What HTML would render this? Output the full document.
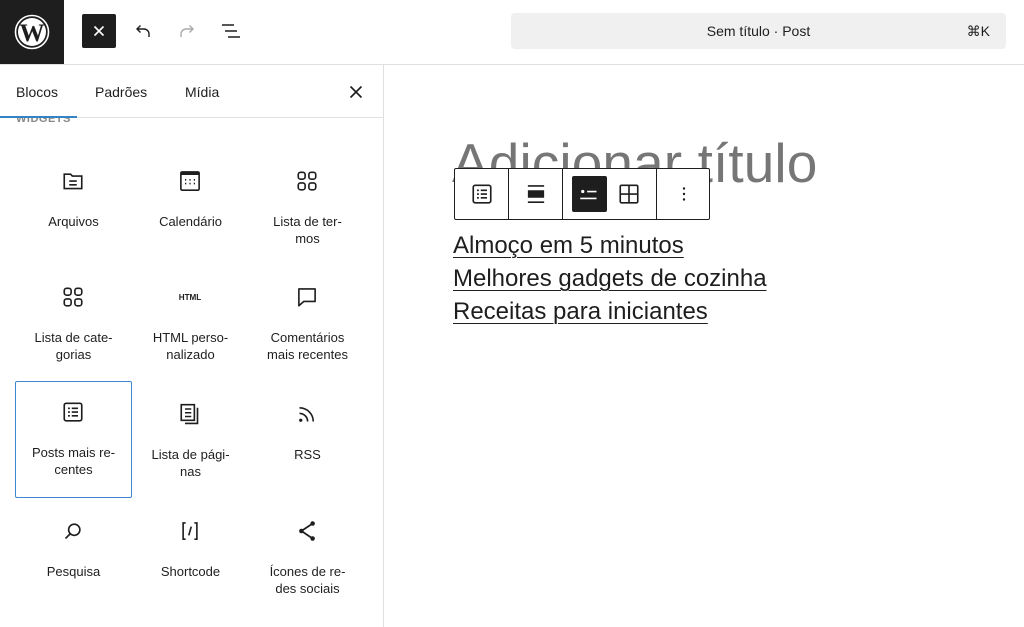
<!DOCTYPE html>
<html><head><meta charset="utf-8"><style>
*{box-sizing:border-box;margin:0;padding:0}
body{width:1024px;height:627px;overflow:hidden;background:#fff;font-family:"Liberation Sans",sans-serif;color:#1e1e1e;position:relative}
.abs{position:absolute}
.top{left:0;top:0;width:1024px;height:65px;border-bottom:1px solid #e0e0e0}
.logo{left:0;top:0;width:64px;height:64px;background:#1e1e1e;display:flex;align-items:center;justify-content:center}
.side{left:0;top:65px;width:384px;height:562px;border-right:1px solid #e0e0e0}
.tabs{left:0;top:65px;width:383px;height:53px;border-bottom:1px solid #e0e0e0;font-size:14px}
.tabs span{position:absolute;top:19px}
.cell{position:absolute;width:117px;height:117px;text-align:center;font-size:13px;line-height:17px;color:#1e1e1e}
.cell svg{position:absolute;left:43px;top:16px}
.cell .l{position:absolute;left:0;right:0;top:63px}
.links a{display:block;color:#1e1e1e;font-size:24px;line-height:33px;text-decoration:underline;text-decoration-thickness:1px;text-underline-offset:4px}
</style></head><body>
<div class="abs top"></div>
<div class="abs logo"><svg width="36" height="36" viewBox="0 0 36 36"><circle cx="18" cy="18" r="16.5" fill="none" stroke="#fff" stroke-width="1.6"/><circle cx="18" cy="18" r="14" fill="#fff"/><text x="18" y="27" text-anchor="middle" font-family="Liberation Serif" font-weight="bold" font-size="25" fill="#1e1e1e">W</text></svg></div>
<div class="abs" style="left:82px;top:14px;width:34px;height:34px;background:#1e1e1e;border-radius:2px"><svg width="34" height="34"><path d="M12.5 12.5l9 9M21.5 12.5l-9 9" stroke="#fff" stroke-width="1.6"/></svg></div>
<svg class="abs" style="left:131px;top:19px" width="24" height="24"><path d="M18 18v-3a5 5 0 0 0-5-5H6M9.5 6.5L6 10l3.5 3.5" fill="none" stroke="#1e1e1e" stroke-width="1.4"/></svg>
<svg class="abs" style="left:175px;top:19px" width="24" height="24"><path d="M6 18v-3a5 5 0 0 1 5-5h7M14.5 6.5L18 10l-3.5 3.5" fill="none" stroke="#aaa" stroke-width="1.4"/></svg>
<svg class="abs" style="left:219px;top:19px" width="24" height="24"><path d="M3 6h12M6 12h12M9 18h12" stroke="#1e1e1e" stroke-width="1.6"/></svg>
<div class="abs" style="left:511px;top:13px;width:495px;height:36px;background:#f0f0f0;border-radius:4px;font-size:14px"><span class="abs" style="left:0;right:0;top:10px;text-align:center">Sem título · Post</span><span class="abs" style="right:16px;top:10px">⌘K</span></div>
<div class="abs side"></div>
<div class="abs tabs"><span style="left:16px">Blocos</span><span style="left:95px">Padrões</span><span style="left:185px">Mídia</span><svg class="abs" style="left:346px;top:17px" width="20" height="20"><path d="M4.5 4.5l11 11M15.5 4.5l-11 11" stroke="#1e1e1e" stroke-width="1.6"/></svg></div>
<div class="abs" style="left:16px;top:116px;font-size:11px;font-weight:bold;color:#888;letter-spacing:.5px;height:10px;overflow:hidden"><span style="position:relative;top:-3px">WIDGETS</span></div>
<div class="abs" style="left:0;top:116px;width:77px;height:2px;background:#3582c4"></div>

<div class="cell" style="left:15px;top:150px"><svg width="30" height="30" viewBox="0 0 24 24"><path d="M5 6.5h5l1.5 1.5h7.5v10h-14z" fill="none" stroke="#1e1e1e" stroke-width="1.3"/><path d="M9 12h6M9 15h6" stroke="#1e1e1e" stroke-width="1.3"/></svg><div class="l">Arquivos</div></div>
<div class="cell" style="left:132px;top:150px"><svg width="30" height="30" viewBox="0 0 24 24"><rect x="4.7" y="4.7" width="14.6" height="14.6" rx="1" fill="none" stroke="#1e1e1e" stroke-width="1.3"/><rect x="4.7" y="4.7" width="14.6" height="2.5" fill="#1e1e1e"/><path d="M8 11h1M11.5 11h1M15 11h1M8 14h1M11.5 14h1M15 14h1" stroke="#1e1e1e" stroke-width="1.3"/></svg><div class="l">Calendário</div></div>
<div class="cell" style="left:249px;top:150px"><svg width="30" height="30" viewBox="0 0 24 24"><g fill="none" stroke="#1e1e1e" stroke-width="1.3"><rect x="5" y="5" width="5.5" height="5.5" rx="1.8"/><rect x="13.5" y="5" width="5.5" height="5.5" rx="1.8"/><rect x="5" y="13.5" width="5.5" height="5.5" rx="1.8"/><rect x="13.5" y="13.5" width="5.5" height="5.5" rx="1.8"/></g></svg><div class="l">Lista de ter-<br>mos</div></div>

<div class="cell" style="left:15px;top:266px"><svg width="30" height="30" viewBox="0 0 24 24"><g fill="none" stroke="#1e1e1e" stroke-width="1.3"><rect x="5" y="5" width="5.5" height="5.5" rx="1.8"/><rect x="13.5" y="5" width="5.5" height="5.5" rx="1.8"/><rect x="5" y="13.5" width="5.5" height="5.5" rx="1.8"/><rect x="13.5" y="13.5" width="5.5" height="5.5" rx="1.8"/></g></svg><div class="l">Lista de cate-<br>gorias</div></div>
<div class="cell" style="left:132px;top:266px"><svg width="30" height="30" viewBox="0 0 24 24"><text x="12" y="14.5" text-anchor="middle" font-size="6.5" font-weight="bold" font-family="Liberation Sans" fill="#1e1e1e">HTML</text></svg><div class="l">HTML perso-<br>nalizado</div></div>
<div class="cell" style="left:249px;top:266px"><svg width="30" height="30" viewBox="0 0 24 24"><path d="M5.5 5.5h13v10h-9l-4 3.5z" fill="none" stroke="#1e1e1e" stroke-width="1.3" stroke-linejoin="round"/></svg><div class="l">Comentários<br>mais recentes</div></div>

<div class="cell" style="left:15px;top:381px;border:1.5px solid #3b87d0;border-radius:2px"><svg width="30" height="30" viewBox="0 0 24 24" style="left:42px;top:15px"><rect x="5" y="5" width="14" height="14" rx="1.5" fill="none" stroke="#1e1e1e" stroke-width="1.3"/><path d="M8 9h1.5M11 9h5M8 12h1.5M11 12h5M8 15h1.5M11 15h5" stroke="#1e1e1e" stroke-width="1.3"/></svg><div class="l" style="top:62px">Posts mais re-<br>centes</div></div>
<div class="cell" style="left:132px;top:383px"><svg width="30" height="30" viewBox="0 0 24 24"><path d="M5 4.5h10.5v12.5H5z" fill="none" stroke="#1e1e1e" stroke-width="1.3"/><path d="M8 8h5M8 11h5M8 14h5" stroke="#1e1e1e" stroke-width="1.2"/><path d="M18 7v12.5H8" fill="none" stroke="#1e1e1e" stroke-width="1.3"/></svg><div class="l">Lista de pági-<br>nas</div></div>
<div class="cell" style="left:249px;top:383px"><svg width="30" height="30" viewBox="0 0 24 24"><circle cx="7" cy="17" r="1.3" fill="#1e1e1e"/><path d="M6 11.5a6.5 6.5 0 0 1 6.5 6.5M6 7a11 11 0 0 1 11 11" fill="none" stroke="#1e1e1e" stroke-width="1.3"/></svg><div class="l">RSS</div></div>

<div class="cell" style="left:15px;top:500px"><svg width="30" height="30" viewBox="0 0 24 24"><circle cx="13" cy="11" r="4.5" fill="none" stroke="#1e1e1e" stroke-width="1.3"/><path d="M9.8 14.2L6 18" stroke="#1e1e1e" stroke-width="1.3"/></svg><div class="l">Pesquisa</div></div>
<div class="cell" style="left:132px;top:500px"><svg width="30" height="30" viewBox="0 0 24 24"><path d="M8.5 5.5h-2v13h2M15.5 5.5h2v13h-2M13 8.5l-2 7" fill="none" stroke="#1e1e1e" stroke-width="1.3"/></svg><div class="l">Shortcode</div></div>
<div class="cell" style="left:249px;top:500px"><svg width="30" height="30" viewBox="0 0 24 24"><path d="M16.5 6L7.5 12l9 6" fill="none" stroke="#1e1e1e" stroke-width="1.4"/><circle cx="16.5" cy="6" r="1.8" fill="#1e1e1e"/><circle cx="7.5" cy="12" r="1.8" fill="#1e1e1e"/><circle cx="16.5" cy="18" r="1.8" fill="#1e1e1e"/></svg><div class="l">Ícones de re-<br>des sociais</div></div>

<div class="abs" style="left:452px;top:130px;font-size:55px;color:#767676;line-height:66px;letter-spacing:0.1px">Adicionar título</div>
<div class="abs" style="left:454px;top:168px;width:256px;height:52px;background:#fff;border:1px solid #1e1e1e;border-radius:2px">
<div class="abs" style="left:53px;top:0;width:1px;height:50px;background:#1e1e1e"></div>
<div class="abs" style="left:107px;top:0;width:1px;height:50px;background:#1e1e1e"></div>
<div class="abs" style="left:201px;top:0;width:1px;height:50px;background:#1e1e1e"></div>
<svg class="abs" style="left:12px;top:10px" width="30" height="30" viewBox="0 0 24 24"><rect x="5" y="5" width="14" height="14" rx="1.5" fill="none" stroke="#1e1e1e" stroke-width="1.3"/><path d="M8 9h1.5M11 9h5M8 12h1.5M11 12h5M8 15h1.5M11 15h5" stroke="#1e1e1e" stroke-width="1.3"/></svg>
<svg class="abs" style="left:66px;top:10px" width="30" height="30" viewBox="0 0 24 24"><path d="M5.5 5.5h13M5.5 18.5h13" stroke="#1e1e1e" stroke-width="1.3"/><rect x="5.5" y="9" width="13" height="6" fill="#1e1e1e"/></svg>
<div class="abs" style="left:117px;top:7px;width:35px;height:36px;background:#1e1e1e;border-radius:2px"><svg class="abs" style="left:2px;top:3px" width="30" height="30" viewBox="0 0 24 24"><circle cx="7" cy="10" r="1.3" fill="#fff"/><path d="M10.5 10h7.5M5 15.5h13" stroke="#fff" stroke-width="1.3"/></svg></div>
<svg class="abs" style="left:159px;top:10px" width="30" height="30" viewBox="0 0 24 24"><rect x="5" y="5" width="14" height="14" rx="1" fill="none" stroke="#1e1e1e" stroke-width="1.3"/><path d="M12 5v14M5 12h14" stroke="#1e1e1e" stroke-width="1.3"/></svg>
<svg class="abs" style="left:217px;top:13px" width="24" height="24"><circle cx="12" cy="6.5" r="1.2" fill="#1e1e1e"/><circle cx="12" cy="12" r="1.2" fill="#1e1e1e"/><circle cx="12" cy="17.5" r="1.2" fill="#1e1e1e"/></svg>
</div>
<div class="abs links" style="left:453px;top:229px"><a>Almoço em 5 minutos</a><a>Melhores gadgets de cozinha</a><a>Receitas para iniciantes</a></div>
</body></html>
